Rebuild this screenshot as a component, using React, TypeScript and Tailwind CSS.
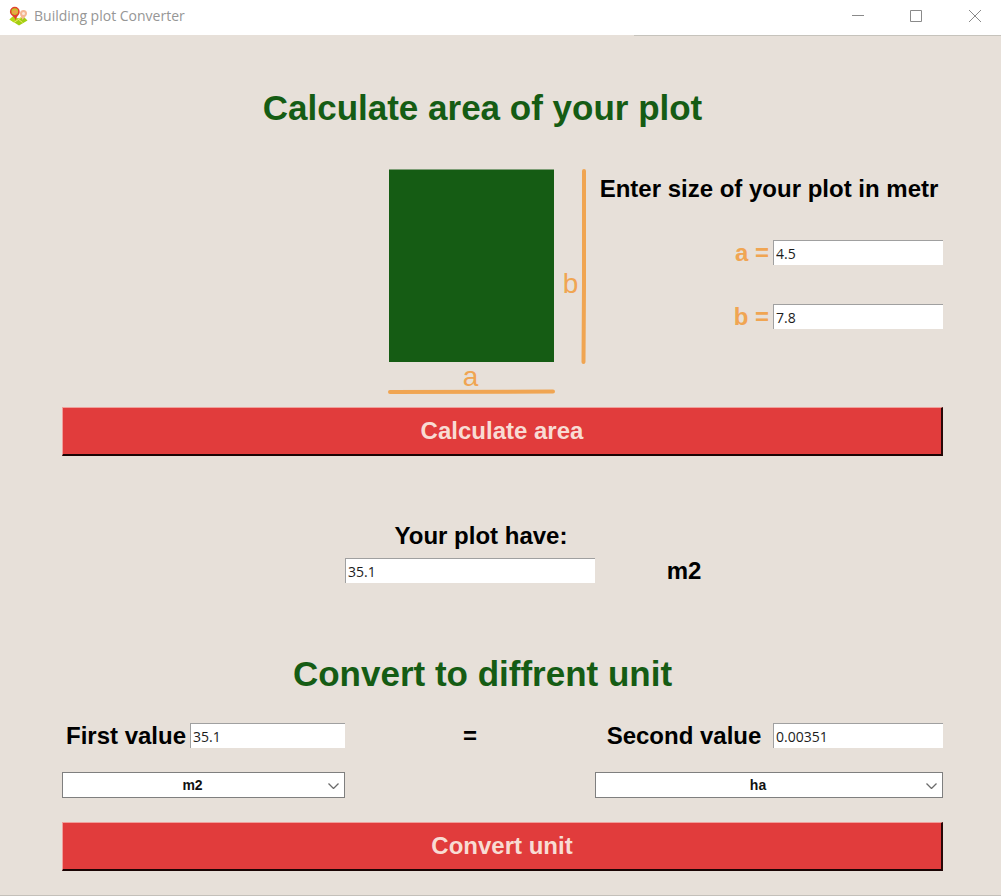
import { useState } from "react";
import type { ReactNode } from "react";

const UNITS: Record<string, number> = { m2: 1, a: 100, ha: 10000, km2: 1000000 };

const trim = (n: number) => (Number.isFinite(n) ? String(Number(n.toPrecision(10))) : "");

function MapIcon() {
  return (
    <svg className="size-5 shrink-0" viewBox="0 0 20 20" aria-hidden="true">
      <path d="M1.500 13.500 5.500 10l4.500 2.500 5.500-2 4 4L11 19.500z" fill="#a3cf12" />
      <path d="m1.500 13.500 4-3.500 4.500 3-4 3.500z" fill="#b5d916" />
      <path d="m6 16.500 8-5.500M10 13l4.500 3.500" stroke="#f3e36b" strokeWidth="1" fill="none" />
      <path d="M15.500 4a3.500 3.500 0 0 0-3.500 3.500c0 2.500 1.500 3.500 2.500 6.500 2-3 4.500-4 4.500-6.500A3.500 3.500 0 0 0 15.500 4z" fill="#f6b795" />
      <circle cx="15.500" cy="7.500" r="1.500" fill="#fbe9dc" />
      <path d="M6.800.800A4.900 4.900 0 0 0 1.900 5.700C1.900 9 6.500 10.300 7.800 14.500c.300-4.200 3.900-5.500 3.900-8.800A4.900 4.900 0 0 0 6.800.800z" fill="#e2402f" />
      <circle cx="6.800" cy="5.600" r="3.300" fill="#c3c92a" />
      <path d="m4.300 5.600 2.500-2.100 2.500 2.100v1.800h-5z" fill="#f0a04a" />
    </svg>
  );
}

function TitleBar() {
  return (
    <header>
      <div className="flex h-[35px] items-center justify-between bg-white pl-2">
        <div className="flex items-center gap-[6px] pb-1">
          <MapIcon />
          <span className="font-['Open_Sans','Noto_Sans',sans-serif] text-[14px] leading-5 text-[#969696]">
            Building plot Converter
          </span>
        </div>
        <div className="flex items-center pb-1 text-[#8a8a8a]">
          <button type="button" aria-label="Minimize" className="flex h-8 w-[58px] items-center justify-center pl-1">
            <svg className="size-3" viewBox="0 0 12 12" stroke="currentColor" fill="none">
              <path d="M0 5.500h12" />
            </svg>
          </button>
          <button type="button" aria-label="Maximize" className="flex h-8 w-[58px] items-center justify-center pl-1">
            <svg className="size-3" viewBox="0 0 12 12" stroke="currentColor" fill="none">
              <path d="M.500.500h11v11H.500z" />
            </svg>
          </button>
          <button type="button" aria-label="Close" className="flex h-8 w-[58px] items-center justify-center pl-[6px]">
            <svg className="size-3" viewBox="0 0 12 12" stroke="currentColor" fill="none">
              <path d="m0 0 12 12M12 0 0 12" />
            </svg>
          </button>
        </div>
      </div>
      <div className="ml-auto h-px w-[367px] bg-[#c6c3bc]" />
    </header>
  );
}

function PlotDiagram() {
  return (
    <svg className="w-full" viewBox="0 0 250 232" role="img" aria-label="Plot with sides a and b">
      <rect x="44" y="4.500" width="165" height="192.500" fill="#155c14" />
      <path d="M239 6 239 120 238.500 197" stroke="#f0a552" strokeWidth="4" strokeLinecap="round" fill="none" />
      <path d="M45 227 208 226.500" stroke="#f0a552" strokeWidth="4" strokeLinecap="round" fill="none" />
      <g fill="#f0a552" fontFamily="Liberation Sans, Arial, sans-serif" fontSize="28">
        <text x="225.500" y="128" textAnchor="middle">b</text>
        <text x="125.500" y="221" textAnchor="middle">a</text>
      </g>
    </svg>
  );
}

type FieldProps = { id: string; value: string; onChange?: (v: string) => void };

function Field({ id, value, onChange }: FieldProps) {
  return (
    <input
      id={id}
      value={value}
      readOnly={!onChange}
      onChange={(e) => onChange?.(e.target.value)}
      className="block h-[25px] w-full min-w-0 border-t border-l border-[#a0a0a0] bg-white pl-[2px] font-['Open_Sans','Noto_Sans',sans-serif] text-[14px] font-normal text-[#1c1c1c] outline-none"
    />
  );
}

function UnitSelect({ label, value, onChange }: { label: string; value: string; onChange: (v: string) => void }) {
  return (
    <div className="relative">
      <select
        aria-label={label}
        value={value}
        onChange={(e) => onChange(e.target.value)}
        className="block h-[26px] w-full appearance-none border border-[#7f7f7f] bg-white pr-[22px] text-center text-[14px] font-bold text-[#111] [text-align-last:center]"
      >
        {Object.keys(UNITS).map((u) => (
          <option key={u}>{u}</option>
        ))}
      </select>
      <svg
        className="pointer-events-none absolute top-[11px] right-[6px] h-[6px] w-[11px]"
        viewBox="0 0 11 6"
        fill="none"
        stroke="#6b6b6b"
        strokeWidth="1.300"
      >
        <path d="m.500.500 5 5 5-5" />
      </svg>
    </div>
  );
}

function ActionButton({ onClick, children }: { onClick: () => void; children: ReactNode }) {
  return (
    <button
      type="button"
      onClick={onClick}
      className="h-[49px] w-full border-t border-r-2 border-b-2 border-l border-t-[#f0a09c] border-r-[#2a0808] border-b-[#1a0404] border-l-[#f0a09c] bg-[#e13c3c] text-2xl font-bold text-[#f8dcd4]"
    >
      {children}
    </button>
  );
}

export default function App() {
  const [a, setA] = useState("4.5");
  const [b, setB] = useState("7.8");
  const [area, setArea] = useState("35.1");
  const [first, setFirst] = useState("35.1");
  const [second, setSecond] = useState("0.00351");
  const [from, setFrom] = useState("m2");
  const [to, setTo] = useState("ha");

  const calculate = () => {
    const result = trim(parseFloat(a) * parseFloat(b));
    setArea(result);
    setFirst(result);
  };
  const convert = () => setSecond(trim((parseFloat(first) * UNITS[from]) / UNITS[to]));

  return (
    <div className="flex min-h-screen flex-col border-b border-[#c4c0ba] bg-[#e7e0d9] font-['Liberation_Sans',Arial,sans-serif] text-black">
      <TitleBar />
      <main className="flex flex-col pt-[52px] pr-[58px] pb-6 pl-[62px]">
        <h1 className="pr-10 text-center text-[35px] leading-10 font-bold text-[#155c14]">
          Calculate area of your plot
        </h1>

        <section className="mt-[37px] grid grid-cols-[283fr_250fr_348fr]">
          <div className="col-start-2">
            <PlotDiagram />
          </div>
          <div className="pt-2 text-2xl font-bold">
            <p className="text-center leading-8 whitespace-nowrap">Enter size of your plot in metr</p>
            <div className="mt-[35px] grid grid-cols-[178fr_170fr] gap-y-[39px] leading-[25px] text-[#f0a552]">
              <label htmlFor="side-a" className="pr-1 text-right">a =</label>
              <Field id="side-a" value={a} onChange={setA} />
              <label htmlFor="side-b" className="pr-1 text-right">b =</label>
              <Field id="side-b" value={b} onChange={setB} />
            </div>
          </div>
        </section>

        <div className="mt-[10px]">
          <ActionButton onClick={calculate}>Calculate area</ActionButton>
        </div>

        <section className="mt-16 grid grid-cols-[283fr_250fr_178fr_170fr] gap-y-[6px] text-2xl font-bold">
          <label htmlFor="area" className="col-start-2 pl-[22px] text-center leading-8">Your plot have:</label>
          <div className="col-start-2 row-start-2">
            <Field id="area" value={area} />
          </div>
          <span className="col-start-3 row-start-2 text-center leading-[25px]">m2</span>
        </section>

        <h2 className="mt-[71px] pr-10 text-center text-[35px] leading-10 font-bold text-[#155c14]">
          Convert to diffrent unit
        </h2>

        <section className="mt-[29px] grid grid-cols-[283fr_250fr_348fr] gap-y-6">
          <div className="flex text-2xl leading-[25px] font-bold">
            <label htmlFor="first" className="shrink-0 pr-1 pl-1">First value</label>
            <Field id="first" value={first} onChange={setFirst} />
          </div>
          <span className="text-center text-2xl leading-[25px] font-bold">=</span>
          <div className="grid grid-cols-[178fr_170fr] text-2xl leading-[25px] font-bold">
            <label htmlFor="second" className="text-center">Second value</label>
            <Field id="second" value={second} />
          </div>
          <UnitSelect label="First unit" value={from} onChange={setFrom} />
          <div className="col-start-3">
            <UnitSelect label="Second unit" value={to} onChange={setTo} />
          </div>
        </section>

        <div className="mt-6">
          <ActionButton onClick={convert}>Convert unit</ActionButton>
        </div>
      </main>
    </div>
  );
}
